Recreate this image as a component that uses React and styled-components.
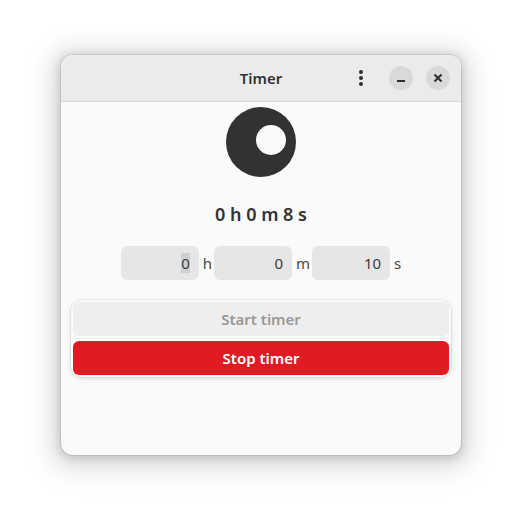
import React, { useCallback, useState } from "react";
import styled, { createGlobalStyle } from "styled-components";

const GlobalStyle = createGlobalStyle`
  *, *::before, *::after { box-sizing: border-box; }
  body {
    margin: 0;
    background: #ffffff;
    color: #323232;
    font-family: "Noto Sans", "Open Sans", sans-serif;
    font-size: 15px;
    line-height: 20px;
  }
`;

const Desktop = styled.div`
  display: flex;
  min-height: 100vh;
  padding: 55px 61px 67px;
`;

const Window = styled.main`
  flex: 1;
  display: flex;
  flex-direction: column;
  overflow: hidden;
  border-radius: 12px;
  background: #fafafa;
  box-shadow:
    0 0 0 1px rgba(0, 0, 0, 0.08),
    0 2px 8px 2px rgba(0, 0, 0, 0.13),
    0 3px 20px 10px rgba(0, 0, 0, 0.09),
    0 6px 32px 16px rgba(0, 0, 0, 0.04);
`;

const HeaderBar = styled.header`
  display: grid;
  grid-template-columns: 1fr auto 1fr;
  align-items: center;
  height: 47px;
  padding: 0 11px;
  background: #ebebeb;
  border-bottom: 1px solid #d8d8d8;
`;

const Title = styled.h1`
  grid-column: 2;
  margin: 0;
  font-size: 15px;
  font-weight: 600;
`;

const HeaderControls = styled.div`
  display: flex;
  align-items: center;
  justify-content: flex-end;
  gap: 13px;
`;

const IconButton = styled.button`
  display: grid;
  place-items: center;
  flex: none;
  width: 24px;
  height: 24px;
  padding: 0;
  border: 0;
  border-radius: 50%;
  background: ${({ $filled }) => ($filled ? "#d9d9d9" : "transparent")};
  color: #2e2e2e;
`;

const MenuButton = styled(IconButton)`
  margin-right: 3px;
`;

const Content = styled.section`
  display: flex;
  flex-direction: column;
  align-items: center;
  padding: 5px 10px 10px;
`;

const Dial = styled.svg`
  display: block;
  width: 72px;
  height: 72px;
`;

const Remaining = styled.output`
  margin-top: 23px;
  font-size: 18px;
  font-weight: 600;
  line-height: 24px;
`;

const Durations = styled.div`
  display: flex;
  gap: 2px;
  margin-top: 20px;
`;

const Duration = styled.label`
  display: flex;
  align-items: center;
  gap: 4px;
  color: #484848;
`;

const NumberInput = styled.input`
  width: 78px;
  height: 34px;
  padding: 0 9px;
  border: 0;
  border-radius: 6px;
  outline: 0;
  background: #e6e6e6;
  color: #3c3c3c;
  font: inherit;
  text-align: right;

  &::selection {
    background: #d0d0d0;
    color: #3c3c3c;
  }
`;

const Actions = styled.div`
  display: flex;
  flex-direction: column;
  align-self: stretch;
  margin-top: 20px;
  border-radius: 12px;
  background: #ffffff;
  overflow: hidden;
  box-shadow:
    0 0 0 1px rgba(0, 0, 0, 0.04),
    0 1px 3px 1px rgba(0, 0, 0, 0.07),
    0 2px 6px 2px rgba(0, 0, 0, 0.03);
`;

const ActionRow = styled.div`
  display: flex;
  padding: 2px;
  background: ${({ $muted }) => ($muted ? "#fafafa" : "#ffffff")};

  & + & {
    border-top: 1px solid #ececec;
  }
`;

const ActionButton = styled.button`
  flex: 1;
  height: 34px;
  padding: 0;
  border: 0;
  border-radius: 6px;
  background: ${({ $danger }) => ($danger ? "#e01b24" : "#eeeeee")};
  color: ${({ $danger }) => ($danger ? "#ffffff" : "#989898")};
  font: inherit;
  font-weight: 600;
`;

function DurationField({ unit, name, initial, selected }) {
  const [value, setValue] = useState(initial);
  const selectOnMount = useCallback(
    (node) => {
      if (node && selected) {
        node.focus();
        node.select();
      }
    },
    [selected]
  );
  return (
    <Duration>
      <NumberInput
        ref={selectOnMount}
        type="text"
        inputMode="numeric"
        aria-label={name}
        value={value}
        onChange={(e) => setValue(e.target.value)}
      />
      {unit}
    </Duration>
  );
}

export default function App() {
  return (
    <>
      <GlobalStyle />
      <Desktop>
        <Window>
          <HeaderBar>
            <Title>Timer</Title>
            <HeaderControls>
              <MenuButton aria-label="Menu">
                <svg width="16" height="16" viewBox="0 0 16 16" fill="currentColor">
                  <circle cx="8" cy="2" r="2" />
                  <circle cx="8" cy="8" r="2" />
                  <circle cx="8" cy="14" r="2" />
                </svg>
              </MenuButton>
              <IconButton $filled aria-label="Minimize">
                <svg width="16" height="16" viewBox="0 0 16 16" fill="currentColor">
                  <rect x="4" y="10" width="8" height="2" />
                </svg>
              </IconButton>
              <IconButton $filled aria-label="Close">
                <svg width="16" height="16" viewBox="0 0 16 16" fill="none" stroke="currentColor" strokeWidth="2">
                  <path d="M4.5 4.5 11.5 11.5M11.5 4.5 4.5 11.5" />
                </svg>
              </IconButton>
            </HeaderControls>
          </HeaderBar>
          <Content>
            <Dial viewBox="0 0 72 72" aria-hidden="true">
              <circle cx="36" cy="35" r="35" fill="#323232" />
              <circle cx="46" cy="33" r="15" fill="#fafafa" />
            </Dial>
            <Remaining>0 h 0 m 8 s</Remaining>
            <Durations>
              <DurationField unit="h" name="Hours" initial="0" selected />
              <DurationField unit="m" name="Minutes" initial="0" />
              <DurationField unit="s" name="Seconds" initial="10" />
            </Durations>
            <Actions>
              <ActionRow $muted>
                <ActionButton disabled>Start timer</ActionButton>
              </ActionRow>
              <ActionRow>
                <ActionButton $danger>Stop timer</ActionButton>
              </ActionRow>
            </Actions>
          </Content>
        </Window>
      </Desktop>
    </>
  );
}
